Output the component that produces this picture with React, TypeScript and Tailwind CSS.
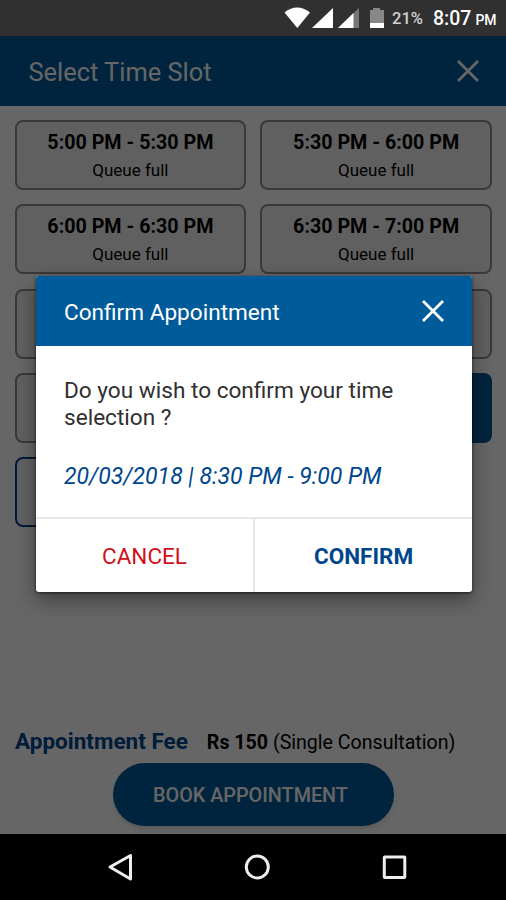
import { FC } from "react";

interface ISlot {
  time: string;
  status: "full" | "selected" | "available";
}

const slots: ISlot[] = [
  { time: "5:00 PM - 5:30 PM", status: "full" },
  { time: "5:30 PM - 6:00 PM", status: "full" },
  { time: "6:00 PM - 6:30 PM", status: "full" },
  { time: "6:30 PM - 7:00 PM", status: "full" },
  { time: "", status: "full" },
  { time: "", status: "full" },
  { time: "", status: "full" },
  { time: "", status: "selected" },
  { time: "", status: "available" },
];

const slotStyles = {
  full: "border-[#909090] bg-[#f0f0f0]",
  selected: "border-[#005b9a] bg-[#005b9a]",
  available: "border-[#00468c] bg-[#f4f4f4]",
};

const CloseIcon: FC = () => (
  <svg className="size-[22px]" viewBox="0 0 22 22" fill="none" stroke="currentColor" strokeWidth="2.8">
    <path d="M1 1 21 21M21 1 1 21" />
  </svg>
);

const StatusBar: FC = () => (
  <div className="flex h-9 items-center bg-[#303030] pl-[284px] text-white">
    <svg className="h-9 w-[102px] shrink-0" viewBox="284 0 102 36" fill="white">
      <path d="M284.500 12.500Q297 2.500 310 12.500L297.300 28Z" />
      <path d="M333 8V28H312Z" />
      <path d="M359 8V28H338Z" fill="#777" />
      <path d="M353.500 13V28H338Z" />
      <path d="M373 8h7v2h4v18h-14V10h3z" fill="#888" />
      <path d="M370 23h14v5h-14z" />
    </svg>
    <span className="mt-[2px] ml-[6px] w-[41px] text-[16.500px] font-medium whitespace-nowrap text-[#d0d0d0]">21%</span>
    <span className="mt-[2px] text-[19.500px] font-medium whitespace-nowrap">
      8:07<span className="ml-[4px] text-[14px]">PM</span>
    </span>
  </div>
);

const SlotCard: FC<ISlot> = ({ time, status }) => (
  <div className={`h-[70px] rounded-lg border-2 pt-[7px] text-center ${slotStyles[status]}`}>
    {time && (
      <>
        <p className="text-[19.700px] leading-[27px] font-bold">{time}</p>
        <p className="text-[17px] leading-[28px]">Queue full</p>
      </>
    )}
  </div>
);

const ConfirmDialog: FC = () => (
  <div className="flex h-[316px] w-[436px] flex-col overflow-hidden rounded-[3px] bg-white shadow-[0_8px_20px_rgba(0,0,0,0.4),0_1px_3px_rgba(0,0,0,0.6)]">
    <header className="flex h-[70px] shrink-0 items-center justify-between bg-[#005b9a] pr-7 pl-7 text-white">
      <h2 className="mt-[3px] text-[22.600px] whitespace-nowrap">Confirm Appointment</h2>
      <CloseIcon />
    </header>
    <div className="flex-1 px-7 pt-[31px]">
      <p className="text-[22.600px] leading-[27px] text-[#303030]">
        Do you wish to confirm your time
        <br />
        selection ?
      </p>
      <p className="mt-[32px] text-[23px] leading-[27px] whitespace-nowrap text-[#00468c] italic">
        20/03/2018 | 8:30 PM - 9:00 PM
      </p>
    </div>
    <div className="flex h-[75px] shrink-0 border-t-2 border-[#e8e8e8] text-[22.500px]">
      <button className="w-[219px] border-r-2 border-[#e8e8e8] pt-[2px] text-[#d0101c]">CANCEL</button>
      <button className="flex-1 pt-[2px] font-bold text-[#00468c]">CONFIRM</button>
    </div>
  </div>
);

const NavBar: FC = () => (
  <nav className="h-[66px] bg-black">
    <svg className="h-full w-full" viewBox="0 0 506 66" fill="none" stroke="#eee" strokeWidth="3">
      <path d="M130.500 21.500V45L110 33Z" strokeLinejoin="round" />
      <circle cx="257.300" cy="33" r="11" />
      <rect x="384.300" y="23" width="20.500" height="20.500" rx="0.500" />
    </svg>
  </nav>
);

const App: FC = () => {
  return (
    <div className="flex h-[900px] w-[506px] flex-col overflow-hidden font-['Roboto',sans-serif]">
      <StatusBar />
      <main className="relative flex flex-1 flex-col bg-white text-black">
        <header className="flex h-[70px] items-center justify-between bg-[#005b9a] pr-[27px] pl-[28.500px] text-white">
          <h1 className="mt-[2px] text-[25.400px] whitespace-nowrap">Select Time Slot</h1>
          <CloseIcon />
        </header>
        <section className="grid grid-cols-2 gap-x-[14px] gap-y-[14.300px] pt-[14.100px] pr-[14px] pl-[14.500px]">
          {slots.map((slot, index) => (
            <SlotCard key={index} {...slot} />
          ))}
        </section>
        <footer className="mt-auto flex flex-col pb-2">
          <div className="flex items-baseline pl-[15px] whitespace-nowrap">
            <span className="text-[22.500px] font-bold text-[#00468c]">Appointment Fee</span>
            <span className="ml-[19px] text-[19.600px]">
              <b>Rs 150</b> (Single Consultation)
            </span>
          </div>
          <button className="mt-1 ml-[113px] h-[63px] w-[281px] rounded-full bg-[#005b9a] pt-[2px] pr-[6px] text-[19.800px] font-medium text-white shadow-md">
            BOOK APPOINTMENT
          </button>
        </footer>
        <div className="absolute inset-0 bg-black/60 pt-[240px] pl-9">
          <ConfirmDialog />
        </div>
      </main>
      <NavBar />
    </div>
  );
};

export default App;
